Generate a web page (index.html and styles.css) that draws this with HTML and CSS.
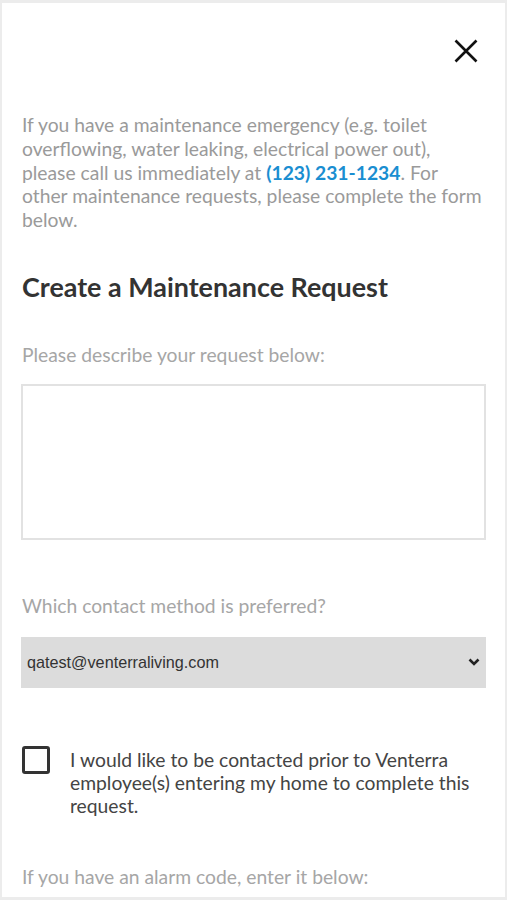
FILE: index.html
```html
<!DOCTYPE html>
<html lang="en">
<head>
<meta charset="utf-8">
<title>Create a Maintenance Request</title>
<link rel="stylesheet" href="styles.css">
</head>
<body>
<div class="card">
  <div class="topbar">
    <button class="close" aria-label="Close">
      <svg width="24" height="24" viewBox="0 0 24 24"><path d="M1.5 1.5 L22.5 22.5 M22.5 1.5 L1.5 22.5" stroke="#111" stroke-width="2.6" fill="none"/></svg>
    </button>
  </div>
  <p class="intro">If you have a maintenance emergency (e.g. toilet overflowing, water leaking, electrical power out), please call us immediately at <a class="phone" href="#">(123) 231-1234</a>. For other maintenance requests, please complete the form below.</p>
  <h1 class="title">Create a Maintenance Request</h1>
  <label class="label" for="desc">Please describe your request below:</label>
  <textarea id="desc" class="textarea"></textarea>
  <label class="label label-contact" for="contact">Which contact method is preferred?</label>
  <div class="select-wrap">
    <select id="contact" class="select">
      <option>qatest@venterraliving.com</option>
    </select>
    <svg class="chev" width="12" height="8" viewBox="0 0 12 8"><path d="M1.5 1.5 L6 6 L10.5 1.5" stroke="#222" stroke-width="2.6" fill="none"/></svg>
  </div>
  <div class="check-row">
    <span class="checkbox"></span>
    <span class="check-label">I would like to be contacted prior to Venterra employee(s) entering my home to complete this request.</span>
  </div>
  <label class="label label-alarm">If you have an alarm code, enter it below:</label>
</div>
</body>
</html>
```

FILE: styles.css
```css
html, body {
  margin: 0;
  padding: 0;
}
body {
  background: #ececec;
  font-family: Lato, "Open Sans", sans-serif;
  padding: 3px 2px 3px 2px;
}
.card {
  background: #fff;
  height: 894px;
  overflow: hidden;
  box-sizing: border-box;
  padding: 0 19px 0 19px;
}
.topbar {
  display: flex;
  justify-content: flex-end;
  padding-top: 36px;
}
.close {
  border: 0;
  background: none;
  padding: 0;
  width: 24px;
  height: 24px;
  margin-right: 8px;
  cursor: pointer;
}
.close svg { display: block; }
.intro {
  margin: 50px 0 0 1px;
  font-size: 19.3px;
  line-height: 23.8px;
  color: #9a9a9a;
}
.phone {
  color: #1a8ed1;
  font-weight: 700;
  text-decoration: none;
}
.title {
  margin: 39px 0 0 1px;
  font-size: 26.9px;
  font-weight: 700;
  color: #333;
  line-height: 32px;
}
.label {
  display: block;
  margin: 40px 0 0 1px;
  font-size: 19.3px;
  line-height: 24px;
  color: #a6a6a6;
}
.textarea {
  display: block;
  margin-top: 17px;
  width: 100%;
  height: 156px;
  box-sizing: border-box;
  border: 2px solid #e2e2e2;
  resize: none;
  background: #fff;
}
.label-contact { margin-top: 54px; }
.select-wrap {
  position: relative;
  margin-top: 19px;
}
.select {
  display: block;
  width: 100%;
  height: 51px;
  appearance: none;
  -webkit-appearance: none;
  border: 0;
  background: #dcdcdc;
  font-family: "Liberation Sans", Arial, sans-serif;
  font-size: 16.2px;
  color: #333;
  padding: 0 6px;
}
.chev {
  position: absolute;
  right: 6px;
  top: 21px;
}
.check-row {
  display: flex;
  align-items: flex-start;
  margin-top: 57px;
  padding-left: 1px;
}
.checkbox {
  flex: none;
  width: 28px;
  height: 28px;
  box-sizing: border-box;
  border: 3px solid #333;
  border-radius: 3px;
  margin-top: 1px;
}
.check-label {
  margin: 3px 0 0 20px;
  font-size: 19.3px;
  line-height: 23px;
  color: #444;
}
.label-alarm { margin-top: 48px; }
```
